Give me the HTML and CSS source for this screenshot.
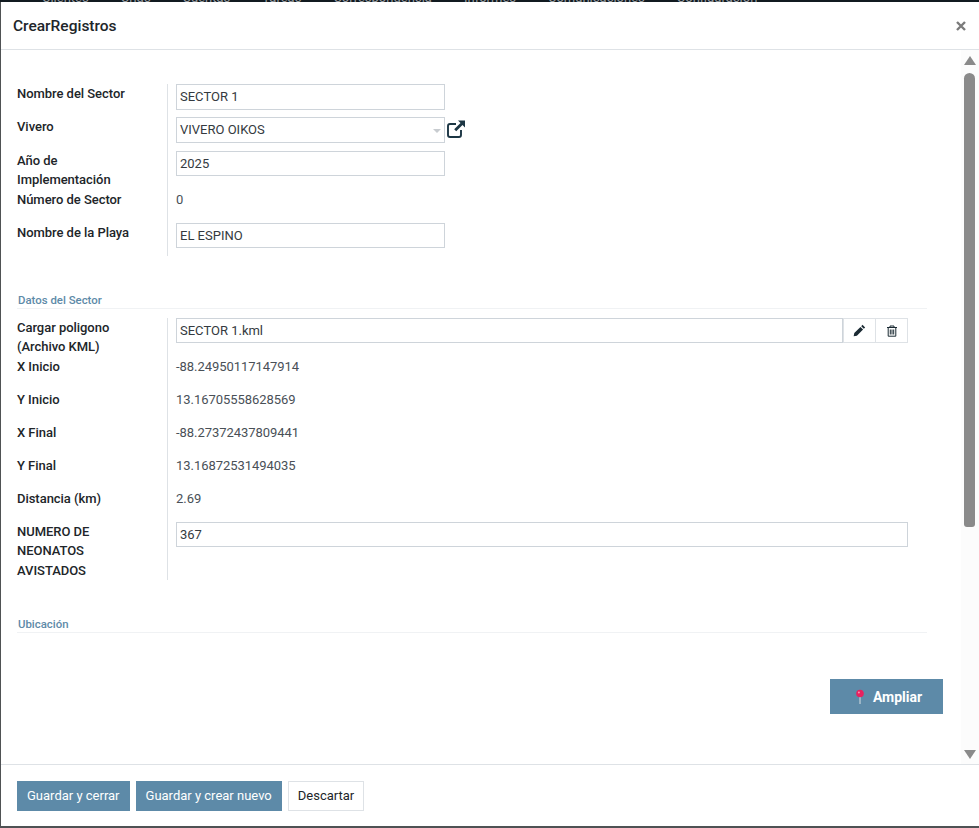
FILE: index.html
```html
<!DOCTYPE html>
<html lang="es">
<head>
<meta charset="utf-8">
<title>CrearRegistros</title>
<link rel="stylesheet" href="styles.css">
</head>
<body>
<div class="backdrop">
  <div class="navstrip"><span>Clientes</span><span>Crías</span><span>Cuentas</span><span>Tareas</span><span>Correspondencia</span><span>Informes</span><span>Comunicaciones</span><span>Configuración</span></div>
  <div class="modal">
    <header class="modal-head">
      <h1 class="modal-title">CrearRegistros</h1>
      <svg class="close" viewBox="0 0 10 10" width="10" height="10"><path d="M1 1l8 8M9 1l-8 8" stroke="#7b7b7b" stroke-width="2.4" fill="none"/></svg>
    </header>
    <div class="modal-main">
      <div class="content">
        <div class="form-group">
          <div class="row h33"><div class="label">Nombre del Sector</div><div class="field"><div class="input wide">SECTOR 1</div></div></div>
          <div class="row h34"><div class="label">Vivero</div><div class="field">
            <div class="input wide select">VIVERO OIKOS<span class="caret"></span></div>
            <svg class="extlink" viewBox="0 0 20 20" width="20" height="20"><path d="M15 11v5a2 2 0 0 1-2 2H4a2 2 0 0 1-2-2V7a2 2 0 0 1 2-2h6" fill="none" stroke="#1c3644" stroke-width="1.900"/><path d="M12 1.500h7v7l-2.500-2.500-6.300 6.300-2-2L14.500 4z" fill="#1c3644"/></svg>
          </div></div>
          <div class="row h39"><div class="label">Año de Implementación</div><div class="field"><div class="input wide short">2025</div></div></div>
          <div class="row h33"><div class="label">Número de Sector</div><div class="field"><div class="value">0</div></div></div>
          <div class="row h33"><div class="label">Nombre de la Playa</div><div class="field"><div class="input wide short">EL ESPINO</div></div></div>
        </div>

        <div class="section-title first">Datos del Sector</div>
        <div class="form-group">
          <div class="row h39"><div class="label">Cargar poligono (Archivo KML)</div><div class="field full">
            <div class="input grow short">SECTOR 1.kml</div>
            <button class="icon-btn" type="button"><svg viewBox="0 0 12 12" width="13" height="13"><path d="M8.800.8l2.400 2.400-1.200 1.200-2.400-2.400zM6.900 2.700l2.400 2.400-5.700 5.700-3 .6.600-3z" fill="#1b2a33"/></svg></button>
            <button class="icon-btn" type="button"><svg viewBox="0 0 12 12" width="12" height="12"><path d="M1 2.500h10M4 2.500V1h4v1.500M2.200 2.500v8.700h7.600V2.500M4.300 4.500v5M6 4.500v5M7.700 4.500v5" fill="none" stroke="#1b2a33" stroke-width="1"/></svg></button>
          </div></div>
          <div class="row h33"><div class="label">X Inicio</div><div class="field"><div class="value">-88.24950117147914</div></div></div>
          <div class="row h33"><div class="label">Y Inicio</div><div class="field"><div class="value">13.16705558628569</div></div></div>
          <div class="row h33"><div class="label">X Final</div><div class="field"><div class="value">-88.27372437809441</div></div></div>
          <div class="row h33"><div class="label">Y Final</div><div class="field"><div class="value">13.16872531494035</div></div></div>
          <div class="row h33"><div class="label">Distancia (km)</div><div class="field"><div class="value">2.69</div></div></div>
          <div class="row h58"><div class="label">NUMERO DE NEONATOS AVISTADOS</div><div class="field full"><div class="input grow short">367</div></div></div>
        </div>

        <div class="section-title second">Ubicación</div>
        <div class="map-actions">
          <button class="ampliar" type="button">
            <svg viewBox="0 0 12 18" width="12" height="18"><path d="M6 9v7" stroke="#d9dfe3" stroke-width="1"/><circle cx="6" cy="5.500" r="3.800" fill="#e8215f"/><circle cx="4.900" cy="4.400" r="1" fill="#ff8fb0"/></svg>
            <span>Ampliar</span>
          </button>
        </div>
      </div>
      <div class="scrollbar">
        <span class="arrow up"></span>
        <span class="thumb"></span>
        <span class="arrow down"></span>
      </div>
    </div>
    <footer class="modal-foot">
      <button class="btn primary" type="button">Guardar y cerrar</button>
      <button class="btn primary" type="button">Guardar y crear nuevo</button>
      <button class="btn secondary" type="button">Descartar</button>
    </footer>
  </div>
</div>
</body>
</html>
```
FILE: styles.css
```css
* { box-sizing: border-box; }
html, body { margin: 0; padding: 0; height: 100%; overflow: hidden; }
body { font-family: Roboto, "Liberation Sans", sans-serif; font-size: 13px; color: #212529; }

.backdrop {
  position: relative;
  width: 979px;
  height: 828px;
  background: #4f5254;
  padding: 2px 0 2px 1px;
}
.backdrop::before {
  content: "";
  position: absolute;
  left: 0; right: 0; top: 0;
  height: 2px;
  background: #111a20;
}
.navstrip {
  position: absolute;
  top: -8px;
  left: 42px;
  display: flex;
  gap: 32px;
  font-size: 13px;
  line-height: 12px;
  color: #9a9fa3;
  height: 10px;
  overflow: hidden;
  z-index: 1;
}
.modal {
  position: relative;
  height: 824px;
  background: #fff;
  display: flex;
  flex-direction: column;
}

.modal-head {
  height: 48px;
  flex: none;
  display: flex;
  align-items: center;
  justify-content: space-between;
  padding: 1px 13px 0 12px;
  border-bottom: 1px solid #dee2e6;
}
.modal-title { margin: 0; font-size: 15.5px; font-weight: 500; color: #212529; line-height: 20px; }

.modal-main { flex: 1; display: flex; min-height: 0; }
.content { flex: 1; padding: 34px 0 0 16px; min-width: 0; }

.form-group { width: 910px; }
.row { display: flex; align-items: flex-start; }
.h33 { height: 33px; }
.h34 { height: 34px; }
.h39 { height: 39px; }
.h58 { height: 58px; }
.label {
  width: 150px;
  padding-right: 14px;
  margin-top: -0.25px;
  font-weight: 500;
  font-size: 13px;
  line-height: 19.5px;
  letter-spacing: -0.04px;
  color: #212529;
}
.field {
  align-self: stretch;
  flex: 1;
  display: flex;
  align-items: flex-start;
  border-left: 1px solid #dee2e6;
  padding-left: 8px;
  min-width: 0;
}
.field.full { padding-right: 19px; }
.input {
  height: 26px;
  border: 1px solid #ced4da;
  background: #fff;
  padding: 0 3px;
  line-height: 24px;
  font-size: 13px;
  color: #343a40;
  position: relative;
}
.input.short { height: 25px; line-height: 23px; }
.input.wide { width: 269px; }
.input.grow { flex: 1; min-width: 0; }
.caret {
  position: absolute;
  right: 3px;
  top: 11px;
  border-left: 4px solid transparent;
  border-right: 4px solid transparent;
  border-top: 4px solid #c8ccd0;
}
.extlink { margin: 2px 0 0 1px; flex: none; }
.value { line-height: 19.5px; font-size: 13px; color: #495057; letter-spacing: -0.05px; }

.icon-btn {
  width: 33px;
  height: 25px;
  flex: none;
  padding: 0;
  background: #fff;
  border: 1px solid #dee2e6;
  display: flex;
  align-items: center;
  justify-content: center;
}
.icon-btn + .icon-btn { margin-left: -1px; }

.section-title {
  width: 910px;
  padding-left: 1px;
  font-size: 11.4px;
  font-weight: 500;
  line-height: 14px;
  height: 16px;
  color: #5d8aa8;
  border-bottom: 1px solid #f0f2f4;
}
.section-title.first { margin-top: 37px; margin-bottom: 9px; }
.section-title.second { margin-top: 37px; }

.map-actions { display: flex; justify-content: flex-end; padding: 46px 18px 0 0; }
.ampliar {
  width: 113px;
  height: 35px;
  border: 0;
  background: #5d8aa8;
  color: #fff;
  font-family: inherit;
  font-size: 14px;
  font-weight: 700;
  display: flex;
  align-items: center;
  justify-content: center;
  gap: 7px;
  padding: 0 0 0 3px;
}

.scrollbar {
  width: 18px;
  flex: none;
  background: #fcfcfc;
  display: flex;
  flex-direction: column;
  align-items: center;
  padding: 6px 1px 5px 0;
}
.arrow { width: 0; height: 0; border-left: 6.500px solid transparent; border-right: 6.500px solid transparent; flex: none; }
.arrow.up { border-bottom: 9px solid #8a8a8a; }
.arrow.down { border-top: 9px solid #8a8a8a; margin-top: auto; }
.thumb { width: 11px; height: 454px; margin-top: 8px; background: #8a8a8a; border-radius: 5.500px 5.500px 3px 3px; flex: none; }

.modal-foot {
  height: 62px;
  flex: none;
  border-top: 1px solid #dee2e6;
  padding: 16px 0 0 16px;
  display: flex;
  align-items: flex-start;
  gap: 6px;
}
.btn {
  height: 30px;
  padding: 0 9px 1px;
  font-family: inherit;
  font-size: 13px;
  border: 1px solid transparent;
  color: #fff;
}
.btn.primary { background: #5d8aa8; border-color: #5d8aa8; }
.btn.secondary { background: #fff; color: #212529; border-color: #dee2e6; }
```
